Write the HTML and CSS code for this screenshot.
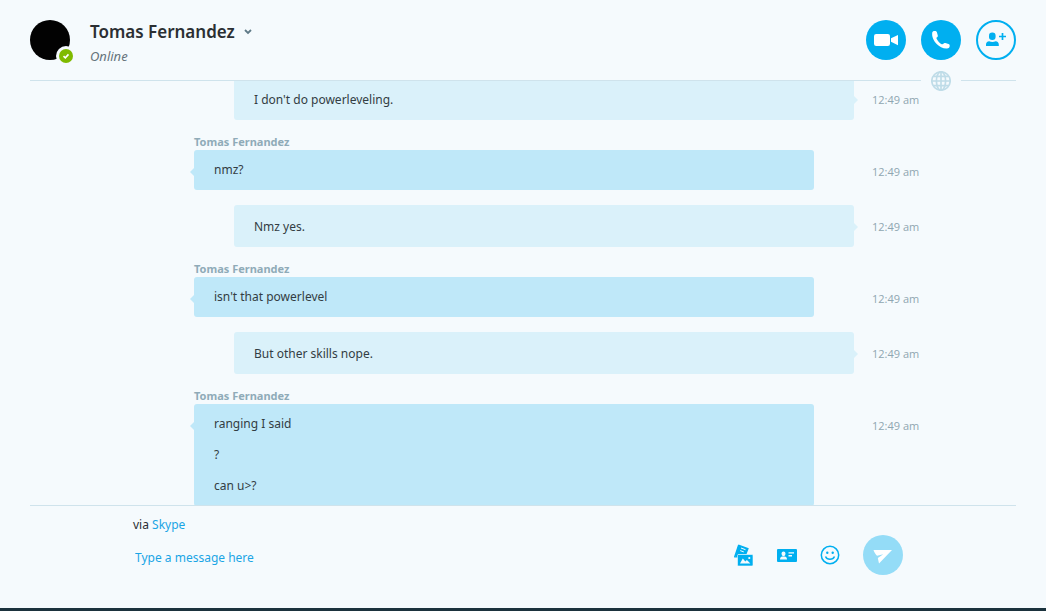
FILE: index.html
```html
<!DOCTYPE html>
<html lang="en">
<head>
<meta charset="utf-8">
<meta name="viewport" content="width=device-width, initial-scale=1">
<title>Tomas Fernandez</title>
<link rel="stylesheet" href="styles.css">
</head>
<body>
<div class="app">
  <header class="header">
    <div class="avatar">
      <svg class="presence" viewBox="0 0 20 20" aria-hidden="true"><circle cx="10" cy="10" r="10" fill="#f5fafd"/><circle cx="10" cy="10" r="7" fill="#7fba00"/><path d="M7.5 10.2l1.8 1.6 3.2-3.4" fill="none" stroke="#fff" stroke-width="1.6"/></svg>
    </div>
    <div class="contact">
      <h1 class="contact-name">
        <button class="name-button" type="button">Tomas Fernandez
          <svg class="chevron" viewBox="0 0 8 6" aria-hidden="true"><path d="M1 1l3 3 3-3" fill="none" stroke="#5f7a87" stroke-width="1.8"/></svg>
        </button>
      </h1>
      <p class="status">Online</p>
    </div>
    <div class="actions">
      <button class="round" type="button" aria-label="Video call">
        <svg viewBox="0 0 40 40"><rect x="8" y="14" width="16" height="12" rx="2.200" fill="#fff"/><path d="M25 18.300L32 15v10.200l-7-3.400z" fill="#fff"/></svg>
      </button>
      <button class="round" type="button" aria-label="Call">
        <svg viewBox="0 0 40 40"><path d="M11.300 12.300c.4-.9 1.300-1.300 2.400-1.300 1.200 0 1.900.3 2.200 1.200l.9 3.200c.2 1-.4 1.500-1.200 2.200-.6.700.6 2.700 2.200 4.300 1.600 1.600 3.500 2.800 4.300 2.200.8-.8 1.300-1.300 2.200-1l3.200.9c1 .3 1.300 1 1.200 2.100-.1 1.200-.6 2-1.700 2.200-4 .8-8.300-1.300-11.300-4.300-3-3-5.200-7.600-4.400-11.700z" fill="#fff"/></svg>
      </button>
      <button class="round outline" type="button" aria-label="Add people">
        <svg viewBox="0 0 40 40"><circle cx="20" cy="20" r="19" fill="none" stroke="#00aff0" stroke-width="2"/><rect x="13" y="12.500" width="6.600" height="7.500" rx="3.200" fill="#00aff0"/><path d="M10 26v-1.500c0-2 1.200-3.300 3.200-3.300 1.800 1 4.600 1 6.400 0 2 0 3.200 1.300 3.200 3.300V26z" fill="#00aff0"/><path d="M26.500 13v7M23 16.500h7" stroke="#00aff0" stroke-width="1.700"/></svg>
      </button>
    </div>
  </header>
  <div class="divider">
    <svg class="globe" viewBox="0 0 20 20" aria-hidden="true"><g fill="none" stroke="#bfdce8" stroke-width="1.700"><circle cx="10" cy="10" r="9.200"/><ellipse cx="10" cy="10" rx="4.600" ry="9.200"/><path d="M10 1v18M1 10h18M2.500 5.300h15M2.500 14.700h15"/></g></svg>
  </div>
  <main class="chat">
    <div class="log">
      <article class="message mine">
        <div class="bubble"><p>I don't do powerleveling.</p></div><time>12:49 am</time>
      </article>
      <article class="message theirs">
        <h2 class="author">Tomas Fernandez</h2>
        <div class="bubble"><p>nmz?</p></div><time>12:49 am</time>
      </article>
      <article class="message mine">
        <div class="bubble"><p>Nmz yes.</p></div><time>12:49 am</time>
      </article>
      <article class="message theirs">
        <h2 class="author">Tomas Fernandez</h2>
        <div class="bubble"><p>isn't that powerlevel</p></div><time>12:49 am</time>
      </article>
      <article class="message mine">
        <div class="bubble"><p>But other skills nope.</p></div><time>12:49 am</time>
      </article>
      <article class="message theirs">
        <h2 class="author">Tomas Fernandez</h2>
        <div class="bubble"><p>ranging I said</p><p>?</p><p>can u&gt;?</p></div><time>12:49 am</time>
      </article>
    </div>
  </main>
  <footer class="footer">
    <form class="composer">
      <div class="entry">
        <p class="via">via <a href="#">Skype</a></p>
        <input class="field" type="text" placeholder="Type a message here" aria-label="Message">
      </div>
      <div class="tools">
        <button class="tool" type="button" aria-label="Send files">
          <svg viewBox="0 0 20 22"><path d="M4.600 .5l10.200 3.700-2.300 6H4v3.500l-2.800-.4z" fill="#00aff0"/><path d="M.6 13.500L4.800 1" stroke="#00aff0" stroke-width="1.600"/><path d="M7 4l4.500 1.700M6.200 6.600l3.600 1.300" stroke="#f5fafd" stroke-width="1"/><rect x="3.500" y="10.500" width="15.500" height="11.500" rx="1" fill="#00aff0" stroke="#f5fafd" stroke-width=".6"/><path d="M6 19.500l2.800-5 2.500 3 1.600-1.600 3.500 3.600z" fill="#f5fafd"/><circle cx="15.300" cy="14" r="1.100" fill="#f5fafd"/></svg>
        </button>
        <button class="tool" type="button" aria-label="Send contact">
          <svg viewBox="0 0 20 22"><rect y="5" width="20" height="13" rx="1" fill="#00aff0"/><g fill="#f5fafd"><ellipse cx="6.500" cy="9.800" rx="2" ry="2.400"/><path d="M3 15.500c0-2 1-2.700 2.300-2.900h2.400c1.300.2 2.300.9 2.300 2.900z"/><path d="M11.500 8.200H17v1.400h-5.500zM11.500 11H15v1.400h-3.500z"/></g></svg>
        </button>
        <button class="tool" type="button" aria-label="Emoticons">
          <svg viewBox="0 0 20 22"><circle cx="10" cy="11" r="8.700" fill="none" stroke="#00aff0" stroke-width="1.500"/><circle cx="7.300" cy="8.700" r="1.200" fill="#00aff0"/><circle cx="12.700" cy="8.700" r="1.200" fill="#00aff0"/><path d="M5.500 12.500c1.600 3.700 7.400 3.700 9 0" fill="none" stroke="#00aff0" stroke-width="1.500"/></svg>
        </button>
        <button class="round send" type="submit" aria-label="Send">
          <svg viewBox="0 0 40 40"><path d="M10.500 15h18.500L16 28.500 14.800 23l5.500-3.800-6.300 1.500c-1.500-1.500-3-3.500-3.500-5.700z" fill="#fff"/></svg>
        </button>
      </div>
    </form>
  </footer>
</div>
</body>
</html>
```
FILE: styles.css
```css
* { box-sizing: border-box; }
body, h1, h2, p { margin: 0; }
body {
  background: #f5fafd;
  color: #2b2f33;
  font: 12px/20px "Noto Sans", "Open Sans", sans-serif;
}
button {
  padding: 0;
  border: 0;
  background: none;
  color: inherit;
  font: inherit;
  cursor: pointer;
}
svg { display: block; }
.app {
  display: flex;
  flex-direction: column;
  height: 100vh;
  border-bottom: 3px solid #1b323d;
}
.header {
  display: flex;
  align-items: flex-start;
  gap: 20px;
  padding: 20px 30px 12px;
}
.avatar {
  position: relative;
  width: 40px;
  height: 40px;
  border-radius: 50%;
  background: #020202;
}
.presence {
  position: absolute;
  right: -6px;
  bottom: -6px;
  width: 20px;
}
.contact { flex: 1; }
.contact-name {
  font-size: 17px;
  font-weight: 600;
  line-height: 24px;
}
.name-button {
  display: flex;
  align-items: center;
  gap: 9px;
}
.chevron { width: 8px; }
.status {
  color: #66747c;
  font-size: 13px;
  font-style: italic;
  line-height: 24px;
}
.actions {
  display: flex;
  gap: 15px;
}
.round {
  width: 40px;
  height: 40px;
  border-radius: 50%;
  background: #00aff0;
}
.outline { background: none; }
.divider {
  display: flex;
  align-items: center;
  gap: 10px;
  height: 1px;
  margin: 0 30px;
}
.divider::before, .divider::after {
  content: "";
  height: 1px;
  background: #cfe3ec;
}
.divider::before { flex: 1; }
.divider::after { width: 55px; }
.globe {
  width: 20px;
  height: 20px;
}
.chat {
  flex: 1;
  min-height: 0;
  overflow: hidden;
}
.log {
  display: flex;
  flex-direction: column;
  gap: 15px;
  max-width: 794px;
  margin: -3px auto 0;
}
.message {
  display: grid;
  grid-template-columns: 1fr 66px;
}
.bubble {
  position: relative;
  border-radius: 3px;
  color: #333d43;
}
.mine .bubble {
  margin-left: 108px;
  padding: 12px 20px 10px;
  background: #daf1fa;
}
.theirs .bubble {
  margin: 0 40px 0 68px;
  padding: 10px 20px;
  background: #bfe8f9;
}
.theirs .bubble p + p { margin-top: 11px; }
.bubble::after {
  content: "";
  position: absolute;
  top: 18px;
  border: 4px solid transparent;
}
.mine .bubble::after {
  left: 100%;
  border-left-color: #daf1fa;
  border-right-width: 0;
}
.theirs .bubble::after {
  right: 100%;
  border-right-color: #bfe8f9;
  border-left-width: 0;
}
.author {
  grid-column: 1 / -1;
  margin-left: 68px;
  padding-bottom: 2px;
  color: #8fabb8;
  font-size: 11px;
  font-weight: 700;
  line-height: 13px;
}
time {
  padding: 12px 0 0 18px;
  color: #8fa6b1;
  font-family: "Open Sans", "Noto Sans", sans-serif;
  font-size: 11px;
  white-space: nowrap;
}
.footer { border-top: 1px solid #cfe3ec; margin: 0 30px; }
.composer {
  display: flex;
  max-width: 794px;
  margin: 0 auto;
  padding: 9px 17px 33px 7px;
}
.entry { flex: 1; }
.via a {
  color: #1aa5e5;
  text-decoration: none;
}
.field {
  width: 100%;
  margin-top: 13px;
  padding: 0 2px;
  border: 0;
  outline: 0;
  background: none;
  font: inherit;
}
.field::placeholder {
  color: #1aa5e5;
  opacity: 1;
}
.tools {
  display: flex;
  align-items: center;
  gap: 23px;
  padding-top: 20px;
}
.tool { width: 20px; }
.send { background: #94dcf7; }
```
